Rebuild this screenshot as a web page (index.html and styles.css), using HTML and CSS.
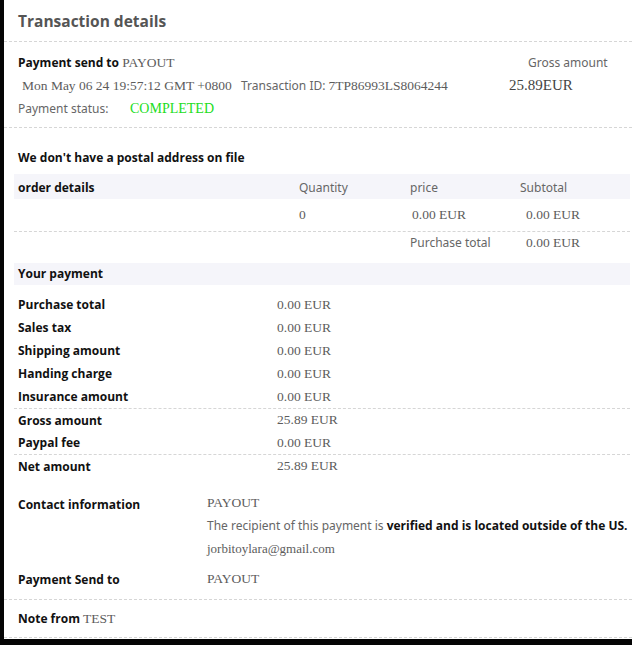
FILE: index.html
```html
<!DOCTYPE html>
<html>
<head>
<meta charset="utf-8">
<link rel="stylesheet" href="styles.css">
</head>
<body>
<div class="card">
  <div class="title">Transaction details</div>

  <section class="summary">
    <div class="srow">
      <div class="c1"><b class="lbl">Payment send to</b> <span class="serif">PAYOUT</span></div>
      <div class="c2"></div>
      <div class="c3"><span class="muted gross-lbl">Gross amount</span></div>
    </div>
    <div class="srow">
      <div class="c1"><span class="serif date">Mon May 06 24 19:57:12 GMT +0800</span></div>
      <div class="c2"><span class="muted">Transaction ID:</span><span class="serif">7TP86993LS8064244</span></div>
      <div class="c3"><span class="serif big">25.89EUR</span></div>
    </div>
    <div class="srow">
      <div class="status"><span class="muted">Payment status:</span><span class="serif green">COMPLETED</span></div>
    </div>
  </section>

  <section class="order">
    <div class="postal lbl">We don't have a postal address on file</div>
    <div class="otable">
      <div class="orow band">
        <div class="lbl">order details</div>
        <div class="muted">Quantity</div>
        <div class="muted">price</div>
        <div class="muted">Subtotal</div>
      </div>
      <div class="orow item">
        <div></div>
        <div class="serif">0</div>
        <div class="serif ind">0.00 EUR</div>
        <div class="serif ind2">0.00 EUR</div>
      </div>
      <div class="orow total">
        <div></div>
        <div></div>
        <div class="muted">Purchase total</div>
        <div class="serif ind2">0.00 EUR</div>
      </div>
    </div>
    <div class="band yp lbl">Your payment</div>
    <div class="pay">
      <div class="prow"><div class="lbl">Purchase total</div><div class="serif">0.00 EUR</div></div>
      <div class="prow"><div class="lbl">Sales tax</div><div class="serif">0.00 EUR</div></div>
      <div class="prow"><div class="lbl">Shipping amount</div><div class="serif">0.00 EUR</div></div>
      <div class="prow"><div class="lbl">Handing charge</div><div class="serif">0.00 EUR</div></div>
      <div class="prow"><div class="lbl">Insurance amount</div><div class="serif">0.00 EUR</div></div>
      <div class="prow sep"><div class="lbl">Gross amount</div><div class="serif">25.89 EUR</div></div>
      <div class="prow"><div class="lbl">Paypal fee</div><div class="serif">0.00 EUR</div></div>
      <div class="prow sep"><div class="lbl">Net amount</div><div class="serif">25.89 EUR</div></div>
    </div>
  </section>

  <section class="contact">
    <div class="crow">
      <div class="lbl clbl">Contact information</div>
      <div class="cval">
        <div class="serif line">PAYOUT</div>
        <div class="muted line">The recipient of this payment is <b class="strong">verified and is located outside of the US.</b></div>
        <div class="serif line small">jorbitoylara@gmail.com</div>
      </div>
    </div>
    <div class="crow send">
      <div class="lbl clbl">Payment Send to</div>
      <div class="cval"><div class="serif line">PAYOUT</div></div>
    </div>
  </section>

  <section class="note">
    <b class="lbl">Note from</b> <span class="serif">TEST</span>
  </section>
</div>
</body>
</html>
```

FILE: styles.css
```css
html, body {
  margin: 0;
  padding: 0;
  background: #050505;
}
body {
  width: 632px;
  height: 645px;
  overflow: hidden;
}
.card {
  margin-left: 4px;
  height: 639px;
  background: #fff;
  overflow: hidden;
  font-family: "Noto Sans", "Open Sans", sans-serif;
  font-size: 12px;
  color: #666;
}
.title {
  height: 42px;
  line-height: 42px;
  padding-left: 14px;
  font-family: "Open Sans", sans-serif;
  font-weight: 700;
  font-size: 15.5px;
  color: #555;
  border-bottom: 1px dashed #d6d6d6;
  box-sizing: border-box;
}
.lbl {
  font-family: "Open Sans", sans-serif;
  font-weight: 700;
  font-size: 12px;
  color: #111;
}
.strong {
  font-family: "Open Sans", sans-serif;
  font-weight: 700;
  color: #111;
}
.serif {
  font-family: "Liberation Serif", serif;
  font-size: 13.5px;
  color: #5c5c5c;
}
.muted {
  font-family: "Noto Sans", sans-serif;
  font-size: 12px;
  color: #666;
}
.summary {
  padding: 9px 0 7px 14px;
  border-bottom: 1px dashed #d6d6d6;
}
.srow {
  display: flex;
  height: 23px;
  align-items: center;
}
.c1 { width: 223px; }
.c2 { width: 268px; display: flex; gap: 3px; align-items: baseline; }
.c3 { flex: 1; }
.date { margin-left: 4px; }
.gross-lbl { margin-left: 19px; }
.big { font-size: 15px; color: #444; }
.status { display: flex; align-items: baseline; }
.status .muted { width: 112px; }
.green { color: #22dd22; font-size: 14px; }
.order {
  padding: 21px 2px 0 10px;
}
.postal {
  padding-left: 4px;
  height: 18px;
  line-height: 18px;
}
.band {
  background: #f5f5fa;
}
.otable { margin-top: 7px; }
.orow {
  display: grid;
  grid-template-columns: 281px 111px 110px 1fr;
  align-items: center;
  padding-left: 4px;
  box-sizing: border-box;
}
.orow.band { height: 25px; padding-top: 2px; }
.orow.item { height: 33px; border-bottom: 1px dashed #d6d6d6; }
.orow.total { height: 21px; }
.ind { padding-left: 2px; }
.ind2 { padding-left: 6px; }
.yp {
  margin-top: 10px;
  height: 22px;
  line-height: 22px;
  padding-left: 4px;
}
.pay { margin-top: 8px; }
.prow {
  display: grid;
  grid-template-columns: 259px 1fr;
  height: 23px;
  align-items: center;
  padding-left: 4px;
  box-sizing: border-box;
}
.prow.sep { border-top: 1px dashed #d6d6d6; }
.contact {
  padding: 16px 0 0 14px;
  border-bottom: 1px dashed #d6d6d6;
}
.crow { display: flex; }
.clbl { width: 189px; padding-top: 3px; }
.line { height: 23px; line-height: 20px; }
.small { font-size: 13px; }
.cval .muted { font-size: 12px; }
.send { margin-top: 7px; height: 30px; }
.send .clbl { padding-top: 2px; }
.note {
  padding-left: 14px;
  height: 38px;
  line-height: 38px;
  border-bottom: 1px dashed #d6d6d6;
  box-sizing: border-box;
}
```
